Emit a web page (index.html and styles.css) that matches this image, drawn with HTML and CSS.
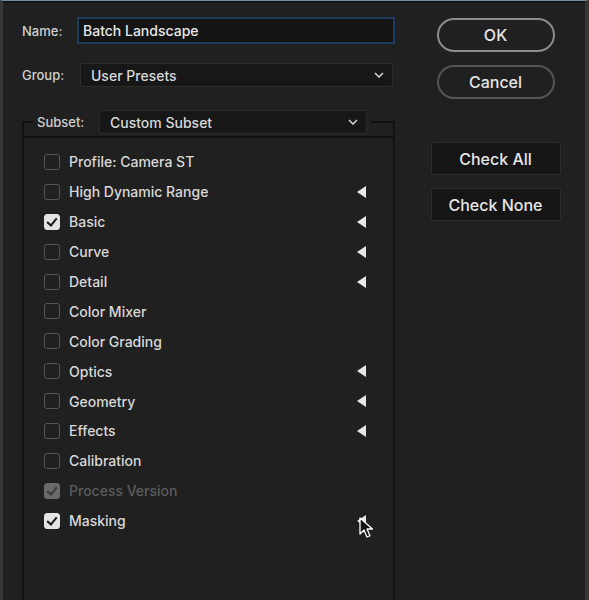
FILE: index.html
```html
<!DOCTYPE html>
<html lang="en">
<head>
  <meta charset="UTF-8">
  <title>Save Preset</title>
  <link rel="stylesheet" href="styles.css">
</head>
<body>
  <div class="dialog">
    <div class="main">
      <div class="field">
        <label for="presetName" class="name-label">Name:</label>
        <input type="text" id="presetName" class="text-input" value="Batch Landscape">
      </div>

      <div class="field group-row">
        <label class="group-label">Group:</label>
        <div class="select group-select">
          <span>User Presets</span>
          <svg class="chevron" viewBox="0 0 10 6" width="10" height="6"><path d="M1 1l4 4 4-4" fill="none" stroke="#cfcfcf" stroke-width="1.6"/></svg>
        </div>
      </div>

      <fieldset class="subset">
        <legend>
          <span class="subset-label">Subset:</span>
          <div class="select subset-select">
            <span>Custom Subset</span>
            <svg class="chevron" viewBox="0 0 10 6" width="10" height="6"><path d="M1 1l4 4 4-4" fill="none" stroke="#cfcfcf" stroke-width="1.6"/></svg>
          </div>
        </legend>

        <ul class="checks">
          <li><span class="box"></span><span class="label">Profile: Camera ST</span></li>
          <li><span class="box"></span><span class="label">High Dynamic Range</span><span class="arrow"></span></li>
          <li><span class="box checked"></span><span class="label">Basic</span><span class="arrow"></span></li>
          <li><span class="box"></span><span class="label">Curve</span><span class="arrow"></span></li>
          <li><span class="box"></span><span class="label">Detail</span><span class="arrow"></span></li>
          <li><span class="box"></span><span class="label">Color Mixer</span></li>
          <li><span class="box"></span><span class="label">Color Grading</span></li>
          <li><span class="box"></span><span class="label">Optics</span><span class="arrow"></span></li>
          <li><span class="box"></span><span class="label">Geometry</span><span class="arrow"></span></li>
          <li><span class="box"></span><span class="label">Effects</span><span class="arrow"></span></li>
          <li><span class="box"></span><span class="label">Calibration</span></li>
          <li class="disabled"><span class="box checked"></span><span class="label">Process Version</span></li>
          <li><span class="box checked"></span><span class="label">Masking</span><span class="arrow"></span>
            <svg class="cursor" viewBox="0 0 14 22" width="14" height="22">
              <path d="M1 1v16l4-4 3 7 3-1.3-3-6.7h5.5z" fill="#111" stroke="#fff" stroke-width="1.3" stroke-linejoin="round"/>
            </svg>
          </li>
        </ul>
      </fieldset>
    </div>

    <div class="actions">
      <button class="pill primary">OK</button>
      <button class="pill">Cancel</button>
      <button class="square first">Check All</button>
      <button class="square">Check None</button>
    </div>
  </div>
</body>
</html>
```

FILE: styles.css
```css
:root {
  --bg: #202020;
  --line: #111;
  --text: #d8d8d8;
  --field-bg: #171717;
}

* {
  box-sizing: border-box;
}

html, body {
  margin: 0;
  height: 100%;
  overflow: hidden;
}

body {
  background: var(--bg);
  font-family: Inter, "Open Sans", sans-serif;
  font-size: 14px;
  font-weight: 500;
  color: var(--text);
}

.dialog {
  display: flex;
  height: 100vh;
  border-top: 1px solid #6f8ea5;
  border-left: 3px solid #363636;
  border-right: 4px solid #353535;
  box-shadow: inset 0 2px 0 #151515;
}

.main {
  width: 392px;
  padding-left: 19px;
  display: flex;
  flex-direction: column;
}

.field {
  display: flex;
  align-items: center;
  margin-top: 16px;
}

.field label {
  font-size: 13px;
  color: #cfcfcf;
}

.name-label {
  width: 55px;
}

.group-label {
  width: 58px;
}

.text-input {
  width: 318px;
  height: 27px;
  background: #141414;
  border: 2px solid #1d3c5e;
  color: #e6e6e6;
  font: inherit;
  padding: 0 4px;
  outline: none;
}

.group-row {
  margin-top: 19px;
}

.select {
  display: flex;
  align-items: center;
  justify-content: space-between;
  height: 24px;
  background: var(--field-bg);
  border: 1px solid #2b2b2b;
  border-radius: 2px;
  padding: 0 8px 0 10px;
}

.group-select {
  width: 313px;
}

.chevron {
  display: block;
}

.subset {
  margin: 23px 0 0;
  padding: 0;
  border: 2px solid var(--line);
  border-bottom: none;
  height: 600px;
  min-width: 0;
}

.subset legend {
  display: flex;
  align-items: center;
  margin-left: 9px;
  padding: 0 4px;
}

.subset-label {
  font-size: 13px;
  color: #cfcfcf;
  width: 62px;
}

.subset-select {
  width: 268px;
}

.checks {
  list-style: none;
  margin: 2px 0 0;
  padding: 9px 27px 0 20px;
  border-top: 2px solid var(--line);
}

.checks li {
  position: relative;
  display: flex;
  align-items: center;
  height: 29.9px;
}

.box {
  width: 16px;
  height: 16px;
  border: 1.5px solid #555;
  border-radius: 3px;
  margin-right: 9px;
  flex: none;
}

.box.checked {
  background: #e4e4e4;
  border-color: #e4e4e4;
  position: relative;
}

.box.checked::after {
  content: "";
  position: absolute;
  left: 4px;
  top: 1px;
  width: 4px;
  height: 8px;
  border: solid #1a1a1a;
  border-width: 0 2.2px 2.2px 0;
  transform: rotate(40deg);
}

.disabled .box.checked {
  background: #6a6a6a;
  border-color: #6a6a6a;
}

.disabled .box.checked::after {
  border-color: #3a3a3a;
}

.disabled .label {
  color: #5c5c5c;
}

.arrow {
  margin-left: auto;
  width: 0;
  height: 0;
  border-top: 6px solid transparent;
  border-bottom: 6px solid transparent;
  border-right: 9px solid #e8e8e8;
}

.cursor {
  position: absolute;
  right: -7px;
  top: 11px;
}

.actions {
  display: flex;
  flex-direction: column;
  align-items: center;
  padding-left: 36px;
  width: 165px;
}

button {
  font-family: Inter, "Open Sans", sans-serif;
  font-size: 16px;
  font-weight: 500;
  color: #e6e6e6;
  cursor: pointer;
}

.pill {
  width: 118px;
  height: 34px;
  background: transparent;
  border: 2px solid #555;
  border-radius: 17px;
  margin-top: 13px;
}

.pill.primary {
  border-color: #8c8c8c;
  margin-top: 17px;
}

.square {
  width: 130px;
  height: 33px;
  background: #151515;
  border: 1px solid #2c2c2c;
  border-radius: 2px;
  margin-top: 13px;
}

.square.first {
  margin-top: 43px;
}
```
